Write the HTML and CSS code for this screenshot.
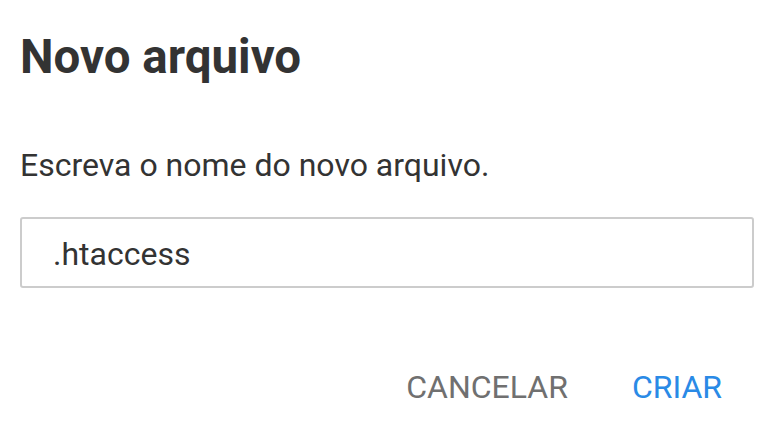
FILE: index.html
```html
<!DOCTYPE html>
<html lang="pt">
<head>
<meta charset="utf-8">
<link rel="stylesheet" href="styles.css">
</head>
<body>
<div class="dialog">
  <h1 class="title">Novo arquivo</h1>
  <p class="message">Escreva o nome do novo arquivo.</p>
  <div class="field"><span class="field-text">.htaccess</span></div>
  <div class="actions">
    <button class="btn btn-cancel">CANCELAR</button>
    <button class="btn btn-ok">CRIAR</button>
  </div>
</div>
</body>
</html>
```
FILE: styles.css
```css
html, body {
  margin: 0;
  padding: 0;
  background: #ffffff;
}
body {
  font-family: Roboto, "Noto Sans", sans-serif;
  width: 770px;
  height: 444px;
  overflow: hidden;
}
.dialog {
  padding: 29px 16px 0 20px;
  display: flex;
  flex-direction: column;
}
.title {
  margin: 0;
  font-size: 47.5px;
  line-height: 56px;
  font-weight: 700;
  color: #333333;
}
.message {
  margin: 60px 0 0 0;
  font-size: 32px;
  line-height: 40px;
  color: #333333;
}
.field {
  margin-top: 32px;
  height: 67px;
  border: 2px solid #cccccc;
  border-radius: 3px;
  padding-left: 31px;
  display: flex;
  align-items: center;
}
.field-text {
  font-size: 32px;
  color: #333333;
  line-height: 38px;
  padding-top: 2px;
}
.actions {
  margin-top: 79px;
  display: flex;
  justify-content: flex-end;
  gap: 64px;
  padding-right: 32px;
}
.btn {
  border: 0;
  background: none;
  padding: 0;
  font-family: Roboto, "Noto Sans", sans-serif;
  font-size: 32px;
  line-height: 40px;
  font-weight: 400;
}
.btn-cancel {
  color: #707070;
}
.btn-ok {
  color: #2a8ae6;
}
```
